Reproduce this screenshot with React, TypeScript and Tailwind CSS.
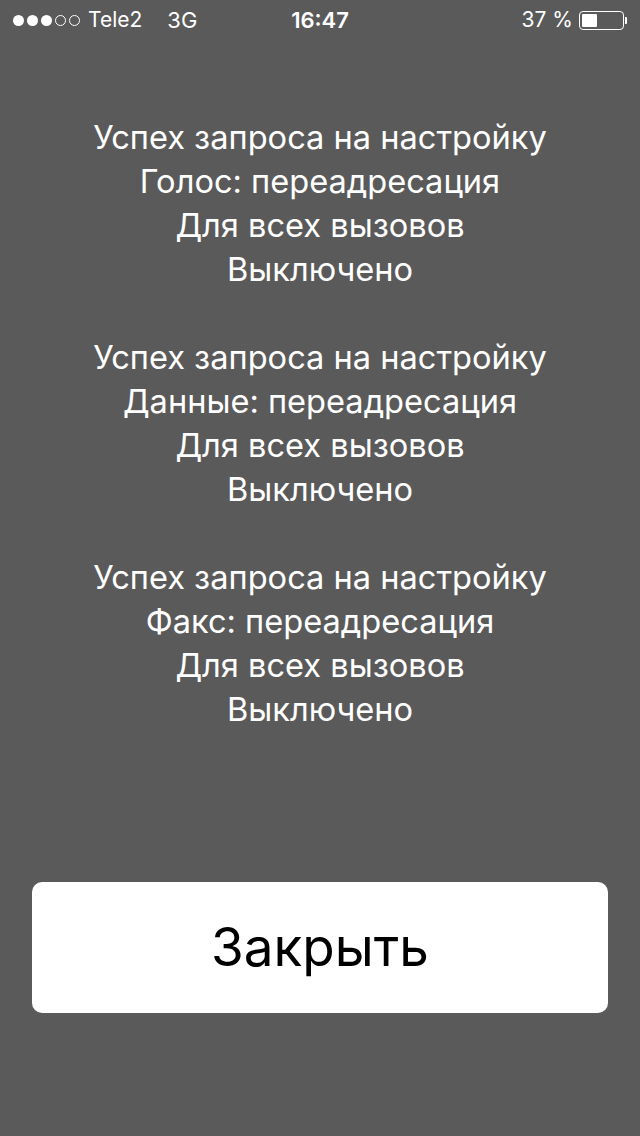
import React from 'react'

const blocks = [
  ['Успех запроса на настройку', 'Голос: переадресация', 'Для всех вызовов', 'Выключено'],
  ['Успех запроса на настройку', 'Данные: переадресация', 'Для всех вызовов', 'Выключено'],
  ['Успех запроса на настройку', 'Факс: переадресация', 'Для всех вызовов', 'Выключено'],
]

function StatusBar() {
  return (
    <div className="relative flex h-[40px] items-center px-[13px] text-[21px] text-white">
      <div className="flex items-center gap-[3px]">
        {[0, 1, 2, 3, 4].map((i) => (
          <span
            key={i}
            className={
              i < 3
                ? 'h-[11px] w-[11px] rounded-full bg-white'
                : 'h-[11px] w-[11px] rounded-full border border-white'
            }
          />
        ))}
      </div>
      <span className="ml-[8px]">Tele2</span>
      <span className="ml-[25px] text-[22px]">3G</span>
      <span className="absolute left-1/2 -translate-x-1/2 text-[22px] font-semibold">16:47</span>
      <div className="ml-auto flex items-center">
        <span>37 %</span>
        <div className="ml-[6px] flex items-center">
          <div className="flex h-[19px] w-[45px] items-center rounded-[4px] border border-white p-[2px]">
            <div className="h-full w-[15px] rounded-[1px] bg-white" />
          </div>
          <div className="ml-[1px] h-[7px] w-[2px] rounded-r-[1px] bg-white" />
        </div>
      </div>
    </div>
  )
}

export default function App() {
  return (
    <div
      className="flex h-[1136px] w-[640px] flex-col bg-[#5a5a5a]"
      style={{ fontFamily: 'Inter, "Noto Sans", sans-serif' }}
    >
      <StatusBar />
      <div className="mt-[75px] flex flex-col items-center text-center text-[32.6px] leading-[44px] text-white">
        {blocks.map((b, i) => (
          <div key={i} className={i > 0 ? 'mt-[44px]' : ''}>
            {b.map((line, j) => (
              <div key={j}>{line}</div>
            ))}
          </div>
        ))}
      </div>
      <div className="mt-auto mb-[123px] px-[32px]">
        <button className="flex h-[131px] w-full items-center justify-center rounded-[10px] bg-white text-[53px] text-black">
          Закрыть
        </button>
      </div>
    </div>
  )
}
